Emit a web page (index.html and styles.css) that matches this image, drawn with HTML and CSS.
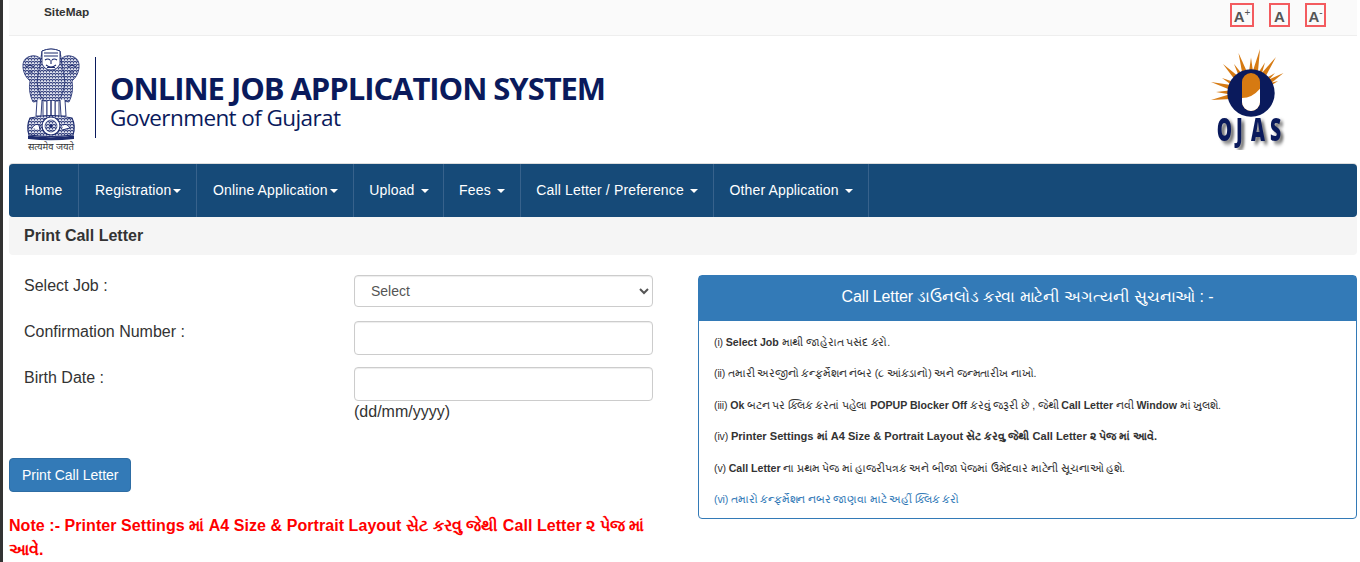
FILE: index.html
```html
<!DOCTYPE html>
<html lang="en">
<head>
  <meta charset="UTF-8" />
  <meta name="viewport" content="width=device-width, initial-scale=1" />
  <title>Print Call Letter</title>
  <link rel="stylesheet" href="styles.css">
</head>

<body>
  <div class="page">
    <div class="topbar">
      <a class="sitemap" href="#">SiteMap</a>
      <div class="font-tools">
        <a class="font-btn font-plus" href="#">A<sup>+</sup></a>
        <a class="font-btn font-normal" href="#">A</a>
        <a class="font-btn font-minus" href="#">A<sup>-</sup></a>
      </div>
    </div>

    <div class="header">
      <div class="emblem">
        <svg width="60" height="93" viewBox="0 0 60 93">
          <defs>
            <pattern id="mane" width="3" height="3" patternUnits="userSpaceOnUse">
              <rect width="3" height="3" fill="#dfe2ef"/>
              <path d="M0 2 Q1.5 0 3 2" fill="none" stroke="#1d2b6e" stroke-width="1"/>
              <circle cx="1.5" cy="2.6" r="0.6" fill="#1d2b6e"/>
            </pattern>
            <g id="side-lion">
              <path d="M2 20 Q1 12 7 9 Q14 6 19 10 L22 20 L20 40 L25 52 L12 54 Q7 44 9 33 Q3 28 2 20 Z" fill="url(#mane)" stroke="#1d2b6e" stroke-width="0.8"/>
              <path d="M5 19 Q9 16 13 19 M7 24 H12" fill="none" stroke="#1d2b6e" stroke-width="1.1"/>
              <path d="M16 52 L15 68 H20 L21 52 M22 52 L22 68 H26 L26 52" fill="#fff" stroke="#1d2b6e" stroke-width="0.9"/>
            </g>
          </defs>
          <use href="#side-lion"/>
          <use href="#side-lion" transform="translate(60 0) scale(-1 1)"/>
          <!-- middle lion -->
          <path d="M21 3 Q30 -1 39 3 L41 16 L44 34 Q42 48 37 53 H23 Q18 48 16 34 L19 16 Z" fill="url(#mane)" stroke="#1d2b6e" stroke-width="0.8"/>
          <path d="M21 3 Q30 -1 39 3 L39 16 Q36 22 30 22 Q24 22 21 16 Z" fill="#fff" stroke="#1d2b6e" stroke-width="0.9"/>
          <path d="M23 5 H37 M23 8 H37 M24 12 Q27 10 29 12 M31 12 Q33 10 36 12 M30 12 V16 M25 17 Q30 21 35 17 M26 19.5 H34" fill="none" stroke="#1d2b6e" stroke-width="1.1"/>
          <path d="M26 53 V68 H30 V53 M30 53 V68 H34 V53" fill="#fff" stroke="#1d2b6e" stroke-width="0.9"/>
          <!-- drum with wheel -->
          <path d="M9 70 Q30 65 51 70 Q55 78 52 87 Q30 90 8 87 Q5 78 9 70 Z" fill="url(#mane)" stroke="#1d2b6e" stroke-width="1.1"/>
          <circle cx="30" cy="78" r="9" fill="#fff" stroke="#1d2b6e" stroke-width="1.1"/>
          <circle cx="30" cy="78" r="6" fill="url(#mane)" stroke="#1d2b6e" stroke-width="0.6"/>
          <circle cx="30" cy="78" r="1.6" fill="#1d2b6e"/>
          <path d="M11 80 Q14 75 18 77 L19 82 M42 77 Q46 75 49 80 L41 82" fill="#fff" stroke="#1d2b6e" stroke-width="1"/>
          <path d="M7 87.5 Q30 91 53 87.5 L53 91 Q30 93.5 7 91 Z" fill="#1d2b6e"/>
        </svg>
        <span class="emblem-motto">सत्यमेव जयते</span>
      </div>
      <div class="title">
        <h1>ONLINE JOB APPLICATION SYSTEM</h1>
        <p>Government of Gujarat</p>
      </div>
      <div class="ojas">
        <svg width="90" height="105" viewBox="0 0 90 105">
          <g fill="#d67a12">
            <polygon points="6,55 46.9,52.9 45.1,43.1"/>
            <polygon points="11,47 46,53 46,43"/>
            <polygon points="6,37 47.3,43.2 44.7,52.8"/>
            <polygon points="17,33 48.3,43.5 43.7,52.5"/>
            <polygon points="18,19 49.6,44.5 42.4,51.5"/>
            <polygon points="29,19 50.3,45.5 41.7,50.5"/>
            <polygon points="33.5,8 50.8,46.5 41.2,49.5"/>
            <polygon points="46,12.5 51,48 41,48"/>
            <polygon points="55,4 50.9,49 41.1,47"/>
            <polygon points="60,17.6 50.5,50.1 41.5,45.9"/>
            <polygon points="71,12 50.1,50.9 41.9,45.1"/>
            <polygon points="70,28 49.2,51.9 42.8,44.1"/>
            <polygon points="78.5,28 48.6,52.3 43.4,43.7"/>
            <polygon points="73,36 48,52.5 44,43.5"/>
          </g>
          <circle cx="46" cy="48" r="23.7" fill="#0a1a5c"/>
          <rect x="37" y="28" width="18" height="38" rx="9" fill="#d67a12"/>
          <path d="M37 53 Q47 53 55 43.7 V57 A9 9 0 0 1 37 57 Z" fill="#fff"/>
          <text class="ojas-text" transform="scale(.62 1)" x="19 50 74 105" y="96">OJAS</text>
        </svg>
      </div>
    </div>

    <nav class="navbar">
      <a class="nav-link nav-home" href="#">Home</a>
      <a class="nav-link" href="#">Registration<span class="caret"></span></a>
      <a class="nav-link" href="#">Online Application<span class="caret"></span></a>
      <a class="nav-link nav-upload" href="#">Upload <span class="caret"></span></a>
      <a class="nav-link" href="#">Fees <span class="caret"></span></a>
      <a class="nav-link" href="#">Call Letter / Preference <span class="caret"></span></a>
      <a class="nav-link" href="#">Other Application <span class="caret"></span></a>
    </nav>

    <div class="page-title">Print Call Letter</div>

    <div class="content">
      <div class="left-col">
        <form class="job-form">
          <label for="job">Select Job :</label>
          <select id="job" class="form-control"><option>Select</option></select>
          <label for="confirm">Confirmation Number :</label>
          <input id="confirm" class="form-control" type="text" />
          <label for="birth">Birth Date :</label>
          <div class="birth-field">
            <input id="birth" class="form-control" type="text" />
            <span class="hint">(dd/mm/yyyy)</span>
          </div>
        </form>
        <button class="btn-print" type="button">Print Call Letter</button>
        <p class="note">Note :- Printer Settings માં A4 Size &amp; Portrait Layout સેટ કરવુ જેથી Call Letter ૨ પેજ માં આવે.</p>
      </div>

      <div class="panel">
        <div class="panel-heading">Call Letter ડાઉનલોડ કરવા માટેની અગત્યની સુચનાઓ : -</div>
        <div class="panel-body">
          <p>(i) <span class="mid">Select Job</span> માથી જાહેરાત પસંદ કરો.</p>
          <p>(ii) તમારી અરજીનો કન્ફર્મેશન નંબર (૮ આંકડાનો) અને જન્મતારીખ નાખો.</p>
          <p>(iii) <span class="mid">Ok</span> બટન પર ક્લિક કરતાં પહેલા <span class="mid">POPUP Blocker Off</span> કરવું જરૂરી છે , જેથી <span class="mid">Call Letter</span> નવી <span class="mid">Window</span> માં ખુલશે.</p>
          <p>(iv) <b>Printer Settings માં A4 Size &amp; Portrait Layout સેટ કરવુ જેથી Call Letter ૨ પેજ માં આવે.</b></p>
          <p>(v) <span class="mid">Call Letter</span> ના પ્રથમ પેજ માં હાજરીપત્રક અને બીજા પેજમાં ઉમેદવાર માટેની સૂચનાઓ હશે.</p>
          <p><a href="#">(vi) તમારો કન્ફર્મેશન નબર જાણવા માટે અહીં ક્લિક કરો</a></p>
        </div>
      </div>
    </div>
  </div>
</body>
</html>
```

FILE: styles.css
```css
* {
  box-sizing: border-box;
}

html, body {
  height: 100%;
}

body {
  margin: 0;
  padding-left: 3px;
  background: #333;
  color: #333;
  font-family: "Liberation Sans", "Noto Sans", sans-serif;
  font-size: 14px;
  overflow: hidden;
}

a {
  color: inherit;
  text-decoration: none;
}

.page {
  background: #fff;
  height: 100%;
  padding: 0 3px 0 6px;
}

.topbar {
  display: flex;
  justify-content: space-between;
  height: 36px;
  background: #fafafa;
  border-bottom: 1px solid #eee;
}

.sitemap {
  margin: 5px 0 0 35px;
  font-size: 11.8px;
  line-height: 14px;
  font-weight: bold;
}

.font-tools {
  display: flex;
  align-items: flex-start;
  margin: 3px 31px 0 0;
}

.font-btn {
  display: block;
  height: 24px;
  border: 2px solid #f35b5f;
  color: #555;
  font-size: 15px;
  font-weight: bold;
  line-height: 23px;
  text-align: center;
}

.font-btn sup {
  font-size: 10px;
  font-weight: normal;
  line-height: 0;
}

.font-plus {
  width: 24px;
  margin-right: 15px;
}

.font-normal {
  width: 21px;
  margin-right: 15px;
}

.font-minus {
  width: 21px;
}

.header {
  display: flex;
  height: 128px;
}

.emblem {
  display: flex;
  flex-direction: column;
  align-items: center;
  width: 60px;
  margin: 12px 0 0 12px;
}

.emblem svg {
  display: block;
}

.emblem-motto {
  margin-top: 1px;
  color: #333;
  font-family: "Noto Sans", "Liberation Sans", sans-serif;
  font-size: 9.5px;
  line-height: 10px;
  white-space: nowrap;
}

.title {
  height: 81px;
  margin: 21px 0 0 14px;
  padding: 13px 0 0 14px;
  border-left: 1px solid #0a1a5c;
  color: #0a1a5c;
  font-family: "Open Sans", sans-serif;
}

.title h1 {
  margin: 0;
  font-size: 31px;
  font-weight: 700;
  letter-spacing: -1.05px;
  line-height: 36px;
  white-space: nowrap;
}

.title p {
  margin: 0;
  font-size: 22.5px;
  letter-spacing: -0.6px;
  line-height: 24px;
}

.ojas {
  margin: 9px 0 0 auto;
  padding-right: 62px;
}

.ojas svg {
  display: block;
}

.ojas-text {
  fill: #0a1a5c;
  font-family: "Open Sans", sans-serif;
  font-size: 31px;
  font-weight: 800;
  filter: drop-shadow(5px 3px 2px #777);
}

.navbar {
  display: flex;
  height: 53px;
  background: #164a78;
  border-radius: 4px;
  box-shadow: 0 -1px 0 #ddd;
  color: #fff;
}

.nav-link {
  display: block;
  padding: 0 15px 0 15.5px;
  border-right: 1px solid #37628c;
  letter-spacing: 0.15px;
  line-height: 52px;
  white-space: nowrap;
}

.nav-home {
  padding-right: 16px;
}

.nav-upload {
  padding-right: 14px;
}

.caret {
  display: inline-block;
  width: 0;
  height: 0;
  margin-left: 2px;
  vertical-align: middle;
  border-top: 4px solid #fff;
  border-right: 4px solid transparent;
  border-left: 4px solid transparent;
}

.page-title {
  height: 38px;
  padding-left: 15px;
  background: #f5f5f5;
  border-radius: 0 0 4px 4px;
  font-size: 16px;
  font-weight: bold;
  line-height: 38px;
}

.content {
  display: flex;
  padding-top: 20px;
}

.left-col {
  width: 645px;
  margin-right: 44px;
}

.job-form {
  display: grid;
  grid-template-columns: 330px 299px;
  row-gap: 12px;
  padding-left: 15px;
}

.job-form label {
  padding-top: 1px;
  font-size: 16px;
  line-height: 20px;
}

.form-control {
  display: block;
  width: 100%;
  height: 34px;
  padding: 6px 12px;
  border: 1px solid #ccc;
  border-radius: 4px;
  background: #fff;
  box-shadow: inset 0 1px 1px rgba(0, 0, 0, 0.075);
  color: #555;
  font-family: inherit;
  font-size: 14px;
}

select.form-control {
  height: 32px;
  margin-bottom: 2px;
}

.hint {
  display: block;
  font-size: 16px;
  line-height: 22px;
}

.btn-print {
  display: block;
  height: 34px;
  margin-top: 35px;
  padding: 6px 12px;
  border: 1px solid #2e6da4;
  border-radius: 4px;
  background: #337ab7;
  color: #fff;
  font-family: inherit;
  font-size: 14px;
}

.note {
  margin: 22px 0 0;
  color: #f00;
  font-size: 16px;
  font-weight: bold;
  letter-spacing: 0.06px;
  line-height: 24px;
}

.panel {
  flex: 1;
  height: 244px;
  border: 1px solid #337ab7;
  border-radius: 4px;
}

.panel-heading {
  height: 45px;
  background: #337ab7;
  color: #fff;
  font-size: 16px;
  letter-spacing: -0.15px;
  line-height: 42px;
  text-align: center;
}

.panel-body {
  padding: 12.5px 15px 0;
  font-size: 10.6px;
  letter-spacing: -0.15px;
}

.panel-body p {
  margin: 0 0 15.5px;
  line-height: 16px;
  white-space: nowrap;
}

.panel-body b {
  font-size: 11.1px;
  letter-spacing: 0;
}

.panel-body a {
  color: #337ab7;
}

.mid {
  font-weight: bold;
  letter-spacing: 0;
}
```
